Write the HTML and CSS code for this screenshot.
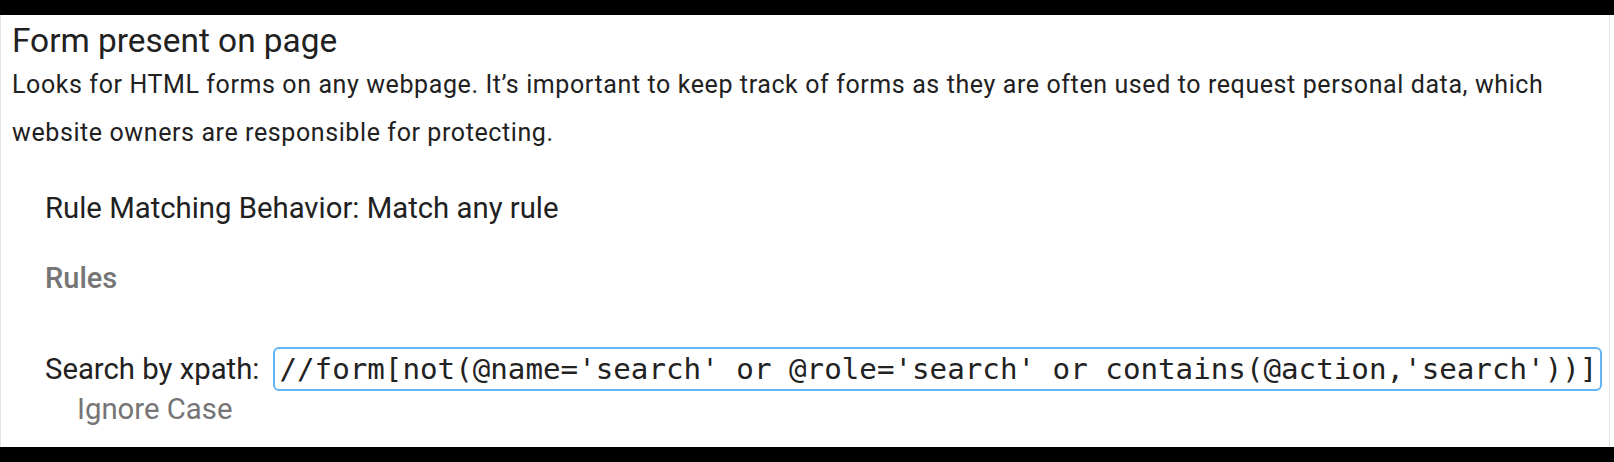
FILE: index.html
```html
<!DOCTYPE html>
<html>
<head>
<meta charset="utf-8">
<link rel="stylesheet" href="styles.css">
</head>
<body>
<div class="bar"></div>
<div class="card">
  <h1 class="title">Form present on page</h1>
  <p class="desc">Looks for HTML forms on any webpage. It’s important to keep track of forms as they are often used to request personal data, which website owners are responsible for protecting.</p>
  <div class="rules">
    <div class="behavior">Rule Matching Behavior: Match any rule</div>
    <div class="rules-head">Rules</div>
    <div class="rule-row">
      <span class="rule-label">Search by xpath:</span>
      <div class="rule-input">//form[not(@name='search' or @role='search' or contains(@action,'search'))]</div>
    </div>
    <div class="ignore">Ignore Case</div>
  </div>
</div>
<div class="bar"></div>
</body>
</html>
```

FILE: styles.css
```css
html, body {
  margin: 0;
  padding: 0;
  background: #ffffff;
}
body {
  width: 1614px;
  height: 462px;
  overflow: hidden;
  font-family: Roboto, "Liberation Sans", sans-serif;
  color: #212121;
}
.bar {
  height: 15px;
  background: #000000;
}
.card {
  box-sizing: border-box;
  width: 1610px;
  height: 432px;
  border-left: 1px solid #e4e4e4;
  border-right: 1px solid #e4e4e4;
  padding: 6px 0 0 11px;
}
.title {
  margin: 0;
  font-weight: 400;
  font-size: 33.4px;
  line-height: 40px;
}
.desc {
  margin: 0;
  font-size: 25px;
  line-height: 48px;
  letter-spacing: 0.6px;
}
.rules {
  padding-left: 33px;
  padding-right: 7px;
  margin-top: 33px;
}
.behavior {
  font-size: 29.3px;
  line-height: 36px;
}
.rules-head {
  margin-top: 34px;
  font-size: 29px;
  font-weight: 500;
  color: #757575;
  line-height: 36px;
}
.rule-row {
  margin-top: 51px;
  display: flex;
  align-items: center;
  gap: 14px;
}
.rule-label {
  font-size: 29.3px;
  line-height: 36px;
  white-space: nowrap;
}
.rule-input {
  flex: 1;
  border: 2px solid #64b5f6;
  border-radius: 6px;
  height: 40px;
  line-height: 40px;
  padding: 0 4px;
  font-family: "DejaVu Sans Mono", "Liberation Mono", monospace;
  font-size: 29.2px;
  color: #222;
  white-space: nowrap;
  overflow: hidden;
}
.ignore {
  margin-left: 32px;
  font-size: 29.3px;
  line-height: 36px;
  color: #757575;
}
```
